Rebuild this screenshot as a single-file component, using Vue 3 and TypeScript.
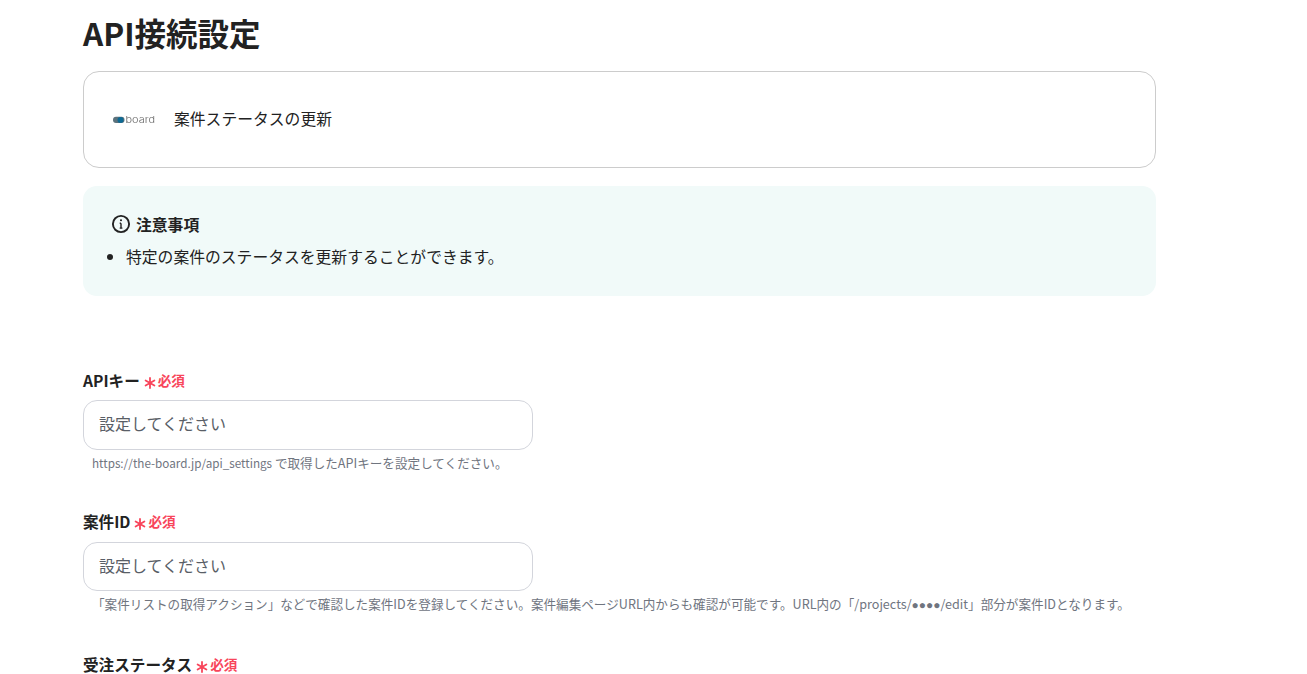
<script setup lang="ts">
interface Field { label: string; url?: string; help: string; dots?: boolean; tail?: string; showInput: boolean }
const fields: Field[] = [
  { label: 'APIキー', url: 'https://the-board.jp/api_settings', help: ' で取得したAPIキーを設定してください。', showInput: true },
  {
    label: '案件ID',
    help: '「案件リストの取得アクション」などで確認した案件IDを登録してください。案件編集ページURL内からも確認が可能です。URL内の「/projects/',
    dots: true,
    tail: '/edit」部分が案件IDとなります。',
    showInput: true,
  },
  { label: '受注ステータス', help: '', showInput: false },
]
</script>

<template>
  <main class="page">
    <h1 class="title">API接続設定</h1>
    <section class="card">
      <svg class="logo" width="42" height="12" viewBox="0 0 42 12" role="img" aria-label="board">
        <defs>
          <filter id="soft" x="-20%" y="-20%" width="140%" height="140%"><feGaussianBlur stdDeviation="0.6" /></filter>
          <filter id="softer" x="-5%" y="-20%" width="110%" height="140%"><feGaussianBlur stdDeviation="0.25" /></filter>
        </defs>
        <g filter="url(#soft)">
          <rect x="0" y="2.8" width="11.5" height="6.2" rx="3" fill="#5c727c" />
          <circle cx="7.5" cy="6" r="3" fill="#0f6a94" />
        </g>
        <text x="12.5" y="8.8" class="logo-text" textLength="29.5" lengthAdjust="spacingAndGlyphs" filter="url(#softer)">board</text>
      </svg>
      <span class="card-text">案件ステータスの更新</span>
    </section>
    <section class="note">
      <div class="note-head">
        <svg width="20" height="20" viewBox="0 0 20 20" fill="none" stroke="#222" stroke-width="1.9">
          <circle cx="10" cy="10" r="8.1" />
          <path d="M10 9.2v4.8M8.7 14.1h2.7M8.7 9.2h1.3" stroke-width="1.4" />
          <circle cx="10" cy="6.3" r="1.05" fill="#222" stroke="none" />
        </svg>
        <strong>注意事項</strong>
      </div>
      <ul class="note-list">
        <li>特定の案件のステータスを更新することができます。</li>
      </ul>
    </section>
    <form class="fields">
      <div v-for="f in fields" :key="f.label" class="field">
        <div class="label">
          <span class="label-name">{{ f.label }}</span>
          <span class="req">
            <svg class="star" width="12" height="12" viewBox="0 0 12 12" stroke="#f8455b" stroke-width="1.8" stroke-linecap="round" aria-hidden="true">
              <path d="M6 1v10M1.6 3.4l8.8 5.2M10.4 3.4l-8.8 5.2" />
            </svg>
            必須
          </span>
        </div>
        <template v-if="f.showInput">
          <input class="input" type="text" placeholder="設定してください" />
          <p class="help"><span v-if="f.url" class="url">{{ f.url }}</span>{{ f.help }}<span v-if="f.dots" class="dots">●●●●</span>{{ f.tail }}</p>
        </template>
      </div>
    </form>
  </main>
</template>

<style>
html, body { margin: 0; height: 100%; overflow: hidden; background: #fff; }
</style>

<style scoped>
.page {
  box-sizing: border-box;
  height: 674px;
  overflow: hidden;
  padding: 10px 0 0 83px;
  width: 1156px;
  color: #222;
  font-family: "Noto Sans CJK JP", "Noto Sans", sans-serif;
}
.title {
  margin: 0;
  font-size: 31.5px;
  line-height: 45px;
  font-weight: 700;
}
.card {
  box-sizing: border-box;
  margin-top: 16px;
  height: 97px;
  border: 1px solid #cccccc;
  border-radius: 16px;
  display: flex;
  align-items: center;
  padding-left: 29px;
  gap: 19px;
}
.logo { flex: none; }
.logo-text {
  font-family: Inter, "Liberation Sans", sans-serif;
  font-size: 9.5px;
  fill: #666;
  font-weight: 300;
}
.card-text { font-size: 15.8px; line-height: 22px; position: relative; top: -1px; }
.note {
  box-sizing: border-box;
  margin-top: 18px;
  height: 110px;
  border-radius: 14px;
  background: #f1faf9;
  padding: 26px 28px 0;
}
.note-head {
  display: flex;
  align-items: center;
  gap: 5px;
  height: 24px;
  font-size: 15.8px;
}
.note-list {
  margin: 9px 0 0;
  padding: 0 0 0 15px;
  font-size: 15.8px;
  line-height: 24px;
}
.fields {
  margin-top: 73px;
  display: flex;
  flex-direction: column;
  gap: 39px;
}
.field { width: 1073px; }
.label {
  display: flex;
  align-items: center;
  height: 21px;
  margin-bottom: 10.25px;
  font-size: 15.6px;
  font-weight: 700;
}
.req {
  margin-left: 4px;
  display: inline-flex;
  align-items: center;
  color: #f8455b;
  font-size: 13.6px;
}
.star {
  margin-right: 2px;
  position: relative;
  top: 3px;
}
.input {
  display: block;
  box-sizing: border-box;
  width: 450px;
  height: 49.5px;
  border: 1px solid #d3d5dc;
  border-radius: 14px;
  padding: 0 16px 4px 15px;
  font: 400 16px "Noto Sans CJK JP", sans-serif;
  background: #fff;
  outline: none;
}
.input::placeholder { color: #595e66; opacity: 1; }
.help {
  margin: 3.75px 0 0 9px;
  font-size: 12.6px;
  line-height: 18px;
  color: #70757f;
  white-space: nowrap;
}
.url { font-size: 11.7px; }
.dots { font-family: "Liberation Sans", sans-serif; font-size: 12px; }
</style>
